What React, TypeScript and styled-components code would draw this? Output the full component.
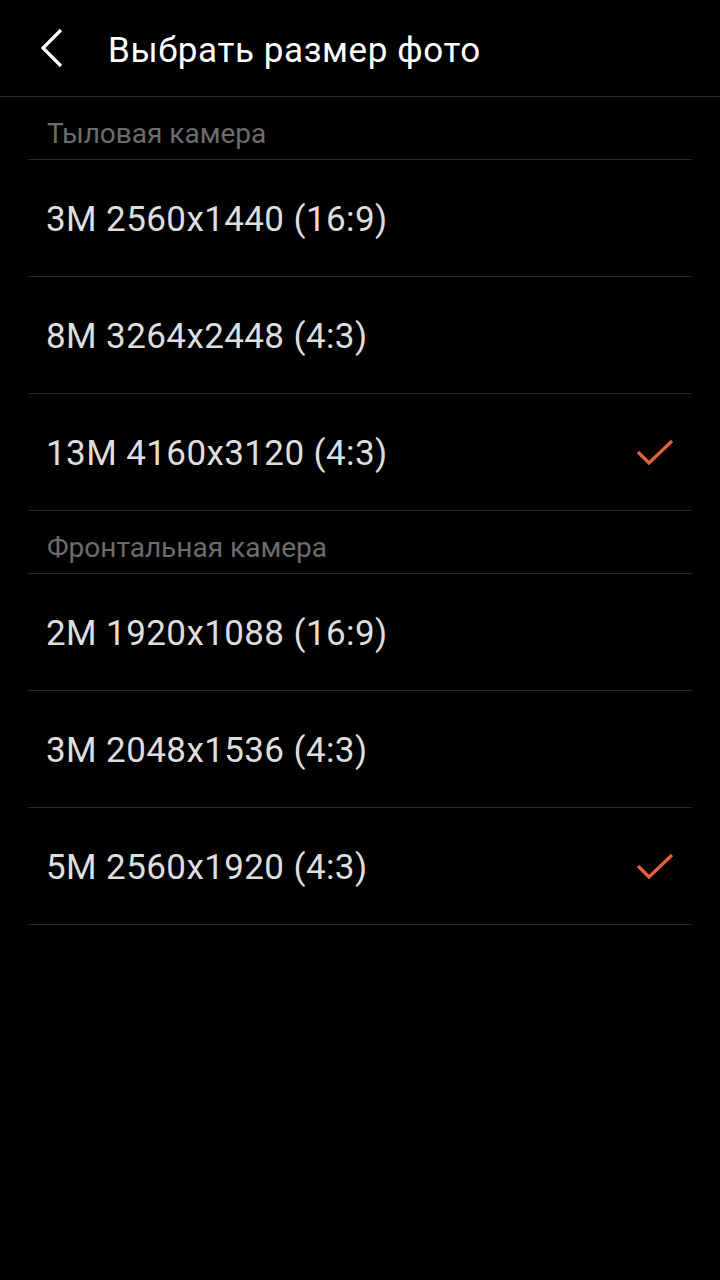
import React from 'react';
import styled, { createGlobalStyle } from 'styled-components';

const GlobalStyle = createGlobalStyle`
  html, body {
    margin: 0;
    padding: 0;
    background: #000;
  }
  body {
    font-family: Roboto, "Noto Sans", sans-serif;
  }
`;

const Screen = styled.div`
  width: 720px;
  min-height: 1280px;
  background: #000;
`;

const Header = styled.header`
  height: 96px;
  display: flex;
  align-items: center;
  border-bottom: 1px solid #262626;
`;

const BackButton = styled.button`
  width: 104px;
  height: 96px;
  padding: 0 0 0 40px;
  border: none;
  background: none;
  display: flex;
  align-items: center;
  cursor: pointer;
`;

const Title = styled.h1`
  margin: 0;
  padding: 4px 0 0 4px;
  font-size: 35px;
  font-weight: 400;
  letter-spacing: 0.6px;
  color: #fff;
`;

const List = styled.ul`
  list-style: none;
  margin: 0;
  padding: 0 28px;
`;

const SectionTitle = styled.li`
  height: 52px;
  padding: 10px 0 0 19px;
  display: flex;
  align-items: center;
  font-size: 28px;
  color: #6c6c6c;
  border-bottom: 1px solid #262626;
`;

const Row = styled.li`
  height: 113px;
  display: flex;
  align-items: center;
  padding: 3px 17px 0 18px;
  font-size: 35px;
  letter-spacing: 0.4px;
  color: #dedede;
  border-bottom: 1px solid #262626;
  cursor: pointer;
`;

const Check = styled.svg`
  margin-left: auto;
`;

const sections = [
  {
    title: 'Тыловая камера',
    items: [
      { label: '3M 2560x1440 (16:9)' },
      { label: '8M 3264x2448 (4:3)' },
      { label: '13M 4160x3120 (4:3)', selected: true },
    ],
  },
  {
    title: 'Фронтальная камера',
    items: [
      { label: '2M 1920x1088 (16:9)' },
      { label: '3M 2048x1536 (4:3)' },
      { label: '5M 2560x1920 (4:3)', selected: true },
    ],
  },
];

export default function App() {
  return (
    <Screen>
      <GlobalStyle />
      <Header>
        <BackButton aria-label="back">
          <svg width="26" height="40" viewBox="0 0 26 40">
            <path d="M21 2 L3 20 L21 38" fill="none" stroke="#fff" strokeWidth="3.2" />
          </svg>
        </BackButton>
        <Title>Выбрать размер фото</Title>
      </Header>
      <List>
        {sections.map((s) => (
          <React.Fragment key={s.title}>
            <SectionTitle>{s.title}</SectionTitle>
            {s.items.map((item) => (
              <Row key={item.label}>
                {item.label}
                {item.selected && (
                  <Check width="40" height="30" viewBox="0 0 40 30">
                    <path d="M3 13 L14 24 L37 2" fill="none" stroke="#e8603c" strokeWidth="3.2" />
                  </Check>
                )}
              </Row>
            ))}
          </React.Fragment>
        ))}
      </List>
    </Screen>
  );
}
